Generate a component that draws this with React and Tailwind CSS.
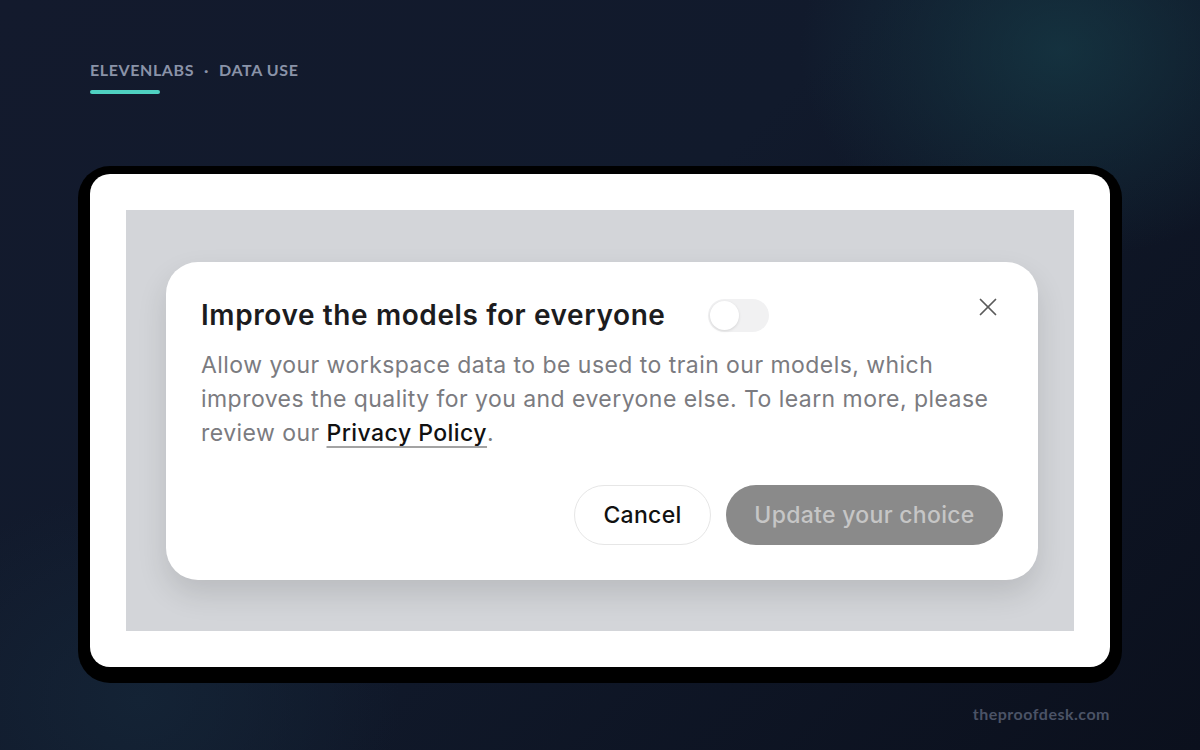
import { X } from 'lucide-react';

const lato = { fontFamily: 'Lato, "Noto Sans", sans-serif' };
const inter = { fontFamily: 'Inter, "Noto Sans", sans-serif' };

function Toggle() {
  return (
    <div className="ml-[42px] w-[61px] h-[33px] rounded-full bg-[#f1f1f2] p-[2px] flex items-center">
      <div className="w-[29px] h-[29px] rounded-full bg-white shadow-[0_1px_3px_rgba(0,0,0,0.12)]" />
    </div>
  );
}

function ConsentDialog() {
  return (
    <div
      className="w-[872px] h-[318px] bg-white rounded-[32px] p-[35px] flex flex-col shadow-[0_14px_30px_rgba(0,0,0,0.12)]"
      style={inter}
    >
      <div className="flex items-center justify-between">
        <div className="flex items-center">
          <h2 className="text-[28px] leading-[36px] font-semibold text-[#1c1c1e] tracking-[0.6px]">
            Improve the models for everyone
          </h2>
          <Toggle />
        </div>
        <button className="-mt-[16px] text-[#5a5a5a]">
          <X size={30} strokeWidth={1.4} />
        </button>
      </div>
      <p className="mt-[15px] text-[23px] leading-[34px] tracking-[0.45px] text-[#7b7b80]">
        Allow your workspace data to be used to train our models, which improves the quality for you and everyone else. To learn more, please review our{' '}
        <a className="text-[#111] font-medium underline decoration-[#a3a3a3] decoration-[1.5px] underline-offset-[5px]">
          Privacy Policy
        </a>
        .
      </p>
      <div className="mt-auto flex justify-end gap-[15px]">
        <button className="w-[137px] h-[60px] rounded-full border border-[#e6e6e6] bg-white text-[23px] tracking-[0.3px] font-medium text-[#111]">
          Cancel
        </button>
        <button className="w-[277px] h-[60px] rounded-full bg-[#8a8a8a] text-[23px] tracking-[0.3px] font-medium text-[#c6c6c6]">
          Update your choice
        </button>
      </div>
    </div>
  );
}

export default function App() {
  return (
    <div
      className="relative w-[1200px] h-[750px] overflow-hidden bg-[linear-gradient(135deg,#131a2d_0%,#111a2c_45%,#0b101d_100%)]"
      style={lato}
    >
      <div className="absolute -top-[160px] right-[-120px] w-[520px] h-[420px] rounded-full bg-[radial-gradient(closest-side,rgba(22,58,70,0.75),rgba(22,58,70,0))]" />
      <div className="absolute top-[490px] -left-[120px] w-[520px] h-[420px] rounded-full bg-[radial-gradient(closest-side,rgba(20,36,54,0.9),rgba(20,36,54,0))]" />

      <div className="relative flex flex-col px-[90px] pt-[60px]">
        <div className="flex items-center text-[16px] leading-[20px] font-bold tracking-[0.6px] text-[#8a93a8]">
          <span>ELEVENLABS</span>
          <span className="mx-[10px]">·</span>
          <span>DATA USE</span>
        </div>
        <div className="mt-[10px] w-[70px] h-[4px] rounded-full bg-[#4fd1c1]" />

        <div className="mt-[80px] w-[1020px] h-[493px] bg-white rounded-[20px] p-[36px] shadow-[0_4px_0_12px_#000]">
          <div className="w-full h-full bg-[#d3d5d9] pl-[40px] pt-[52px]">
            <ConsentDialog />
          </div>
        </div>

        <div className="mt-[37px] flex justify-end text-[16px] leading-[20px] tracking-[0.5px] font-bold text-[#4b5366]">
          theproofdesk.com
        </div>
      </div>
    </div>
  );
}
